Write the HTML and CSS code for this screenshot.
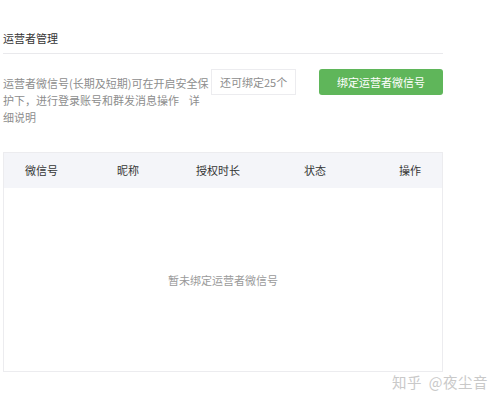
FILE: index.html
```html
<!DOCTYPE html>
<html lang="zh-CN">
<head>
<meta charset="utf-8">
<title>运营者管理</title>
<link rel="stylesheet" href="styles.css">
</head>
<body>
<div class="page">
  <div class="title">运营者管理</div>
  <div class="intro">
    <div class="desc">运营者微信号(长期及短期)可在开启安全保护下，进行登录账号和群发消息操作&nbsp;&nbsp;&nbsp; 详细说明</div>
    <div class="quota">还可绑定25个</div>
    <div class="btn">绑定运营者微信号</div>
  </div>
  <div class="table">
    <div class="thead">
      <div class="c1">微信号</div>
      <div class="c2">昵称</div>
      <div class="c3">授权时长</div>
      <div class="c4">状态</div>
      <div class="c5">操作</div>
    </div>
    <div class="tbody">暂未绑定运营者微信号</div>
  </div>
</div>
<div class="watermark">知乎 @夜尘音</div>
</body>
</html>
```
FILE: styles.css
```css
html, body {
  margin: 0;
  padding: 0;
  background: #ffffff;
}
body {
  font-family: "Noto Sans CJK SC", "Noto Sans", sans-serif;
  font-size: 11px;
  color: #353535;
  position: relative;
  width: 499px;
  height: 403px;
  overflow: hidden;
}
.page {
  padding: 30px 0 0 3px;
  width: 440px;
}
.title {
  line-height: 16px;
  padding-bottom: 7px;
  border-bottom: 1px solid #e9e9ec;
  color: #353535;
}
.intro {
  display: flex;
  align-items: flex-start;
  margin-top: 15px;
}
.desc {
  width: 207px;
  flex: none;
  padding-top: 6px;
  line-height: 17px;
  color: #8d8d8d;
}
.quota {
  flex: none;
  margin-left: 1px;
  width: 85px;
  height: 26px;
  box-sizing: border-box;
  border: 1px solid #ececef;
  padding-left: 8px;
  line-height: 24px;
  color: #8d8d8d;
}
.btn {
  flex: none;
  margin-left: 23px;
  width: 124px;
  height: 26px;
  box-sizing: border-box;
  border-radius: 3px;
  background: #5fb65a;
  color: #ffffff;
  text-align: center;
  line-height: 26px;
}
.table {
  margin-top: 26px;
  border: 1px solid #ececef;
  box-sizing: border-box;
  width: 440px;
}
.thead {
  display: grid;
  grid-template-columns: 75px 98px 82px 112px 71px;
  height: 35px;
  background: #f4f5f9;
  line-height: 35px;
  color: #353535;
  text-align: center;
}
.c5 {
  padding-left: 7px;
}
.tbody {
  height: 183px;
  display: flex;
  align-items: center;
  justify-content: center;
  color: #9a9a9a;
}
.watermark {
  position: absolute;
  left: 392px;
  top: 373px;
  font-size: 14.5px;
  line-height: 18px;
  letter-spacing: 0.5px;
  word-spacing: 3px;
  color: #c9c9c9;
  white-space: nowrap;
}
```
